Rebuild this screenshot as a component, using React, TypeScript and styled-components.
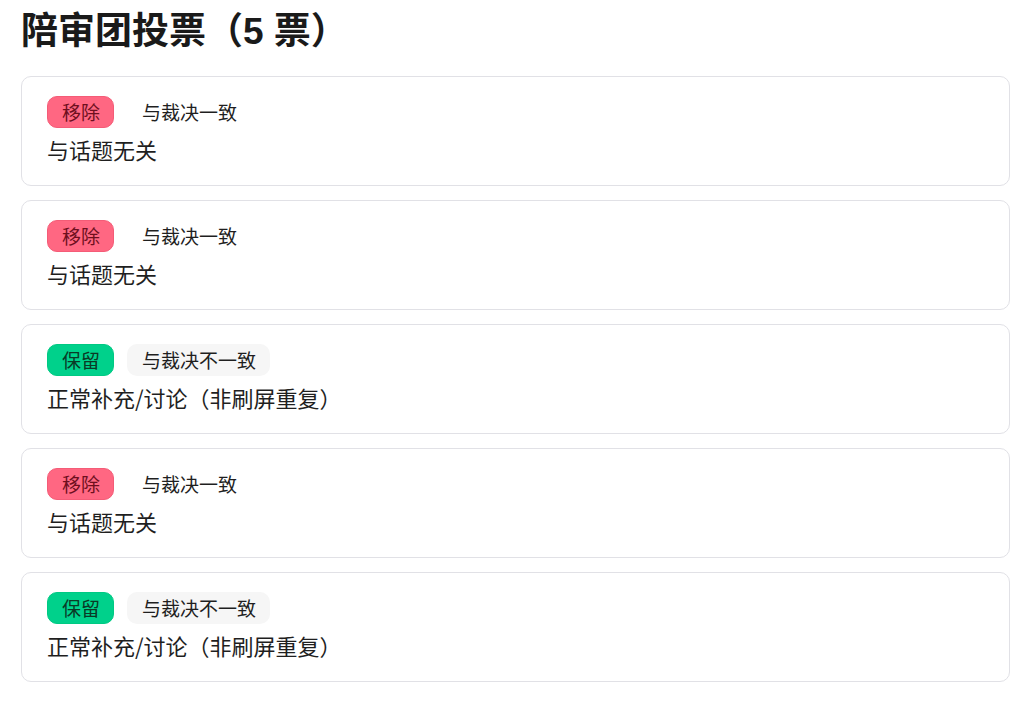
import React from "react";
import styled, { createGlobalStyle } from "styled-components";

const Global = createGlobalStyle`
  html, body { margin: 0; padding: 0; background: #ffffff; }
  body {
    font-family: "Noto Sans CJK SC", "Noto Sans", sans-serif;
    color: #1f1f1f;
  }
`;

const Page = styled.div`
  padding: 10px 14px 20px 21px;
`;

const Title = styled.h1`
  margin: 0 0 22px 0;
  font-family: "Liberation Sans", "Noto Sans CJK SC", sans-serif;
  font-size: 37px;
  line-height: 44px;
  font-weight: 700;
  color: #1a1a1a;
`;

const List = styled.div`
  display: flex;
  flex-direction: column;
  gap: 14px;
`;

const Card = styled.div`
  border: 1px solid #e1e1e6;
  border-radius: 10px;
  padding: 19px 25px 20px 25px;
  display: flex;
  flex-direction: column;
  gap: 5px;
`;

const Row = styled.div`
  display: flex;
  align-items: center;
  gap: 13px;
`;

const Badge = styled.span<{ $tone: "remove" | "keep" | "plain" | "muted" }>`
  display: inline-flex;
  align-items: center;
  height: 32px;
  padding: 0 13px 0 14px;
  border-radius: 10px;
  font-size: 19px;
  line-height: 32px;
  box-sizing: border-box;
  background: ${(p) =>
    p.$tone === "remove"
      ? "#ff6782"
      : p.$tone === "keep"
      ? "#00d18b"
      : p.$tone === "muted"
      ? "#f6f6f6"
      : "transparent"};
  color: ${(p) =>
    p.$tone === "remove" ? "#6e0f1e" : p.$tone === "keep" ? "#0a3a26" : "#1f1f1f"};
  border: 1px solid
    ${(p) => (p.$tone === "remove" ? "#f45c77" : p.$tone === "keep" ? "#00c983" : "transparent")};
`;

const Reason = styled.div`
  font-size: 22px;
  line-height: 32px;
  color: #1f1f1f;
`;

type Vote = { keep: boolean; agree: boolean; reason: string };

const votes: Vote[] = [
  { keep: false, agree: true, reason: "与话题无关" },
  { keep: false, agree: true, reason: "与话题无关" },
  { keep: true, agree: false, reason: "正常补充/讨论（非刷屏重复）" },
  { keep: false, agree: true, reason: "与话题无关" },
  { keep: true, agree: false, reason: "正常补充/讨论（非刷屏重复）" },
];

export default function App() {
  return (
    <>
      <Global />
      <Page>
        <Title>陪审团投票（5 票）</Title>
        <List>
          {votes.map((v, i) => (
            <Card key={i}>
              <Row>
                <Badge $tone={v.keep ? "keep" : "remove"}>{v.keep ? "保留" : "移除"}</Badge>
                <Badge $tone={v.agree ? "plain" : "muted"}>
                  {v.agree ? "与裁决一致" : "与裁决不一致"}
                </Badge>
              </Row>
              <Reason>{v.reason}</Reason>
            </Card>
          ))}
        </List>
      </Page>
    </>
  );
}
